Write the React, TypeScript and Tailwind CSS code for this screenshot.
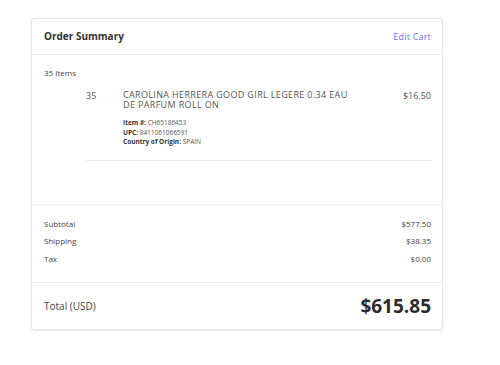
export default function App() {
  return (
    <div className="min-h-screen w-full bg-white pt-[18px] pl-[31px]" style={{ fontFamily: '"Open Sans", "Liberation Sans", sans-serif' }}>
      <div className="w-[412px] rounded-[3px] border border-[#e6e6e6] bg-white shadow-[0_1px_3px_rgba(0,0,0,0.08)]">
        <div className="flex h-[36px] items-center justify-between border-b border-[#ebebeb] pl-[12px] pr-[11px]">
          <span className="text-[10px] font-bold text-[#333]">Order Summary</span>
          <span className="text-[9px] tracking-[0.2px] text-[#6b70ec]">Edit Cart</span>
        </div>
        <div className="h-[150px] border-b border-[#ebebeb] pl-[12px] pr-[11px] pt-[12px]">
          <div className="text-[8px] text-[#444]">35 Items</div>
          <div className="ml-[42px] mt-[11px] flex border-b border-[#e8e8e8] pb-[13px]">
            <div className="w-[37px] text-[9px] leading-[11px] text-[#555]">35</div>
            <div className="flex-1">
              <div className="w-[238px] text-[9px] leading-[10px] tracking-[0.35px] text-[#555]">
                CAROLINA HERRERA GOOD GIRL LEGERE 0.34 EAU DE PARFUM ROLL ON
              </div>
              <div className="mt-[8px] text-[6.5px] leading-[9.5px] text-[#555]">
                <div><span className="font-bold text-[#333]">Item #:</span> CH65186453</div>
                <div><span className="font-bold text-[#333]">UPC:</span> 8411061066591</div>
                <div><span className="font-bold text-[#333]">Country of Origin:</span> SPAIN</div>
              </div>
            </div>
            <div className="text-[9px] leading-[11px] text-[#555]">$16.50</div>
          </div>
        </div>
        <div className="h-[78px] border-b border-[#ebebeb] pl-[12px] pr-[11px] pt-[10px] text-[8px] text-[#444]">
          <div className="flex h-[17.5px] items-center justify-between">
            <span>Subtotal</span>
            <span>$577.50</span>
          </div>
          <div className="flex h-[17.5px] items-center justify-between">
            <span>Shipping</span>
            <span>$38.35</span>
          </div>
          <div className="flex h-[17.5px] items-center justify-between">
            <span>Tax</span>
            <span>$0.00</span>
          </div>
        </div>
        <div className="flex h-[46px] items-center justify-between pl-[12px] pr-[11px]">
          <span className="text-[10px] text-[#444]">Total (USD)</span>
          <span className="text-[19px] font-bold text-[#2b2b2b]">$615.85</span>
        </div>
      </div>
    </div>
  )
}
